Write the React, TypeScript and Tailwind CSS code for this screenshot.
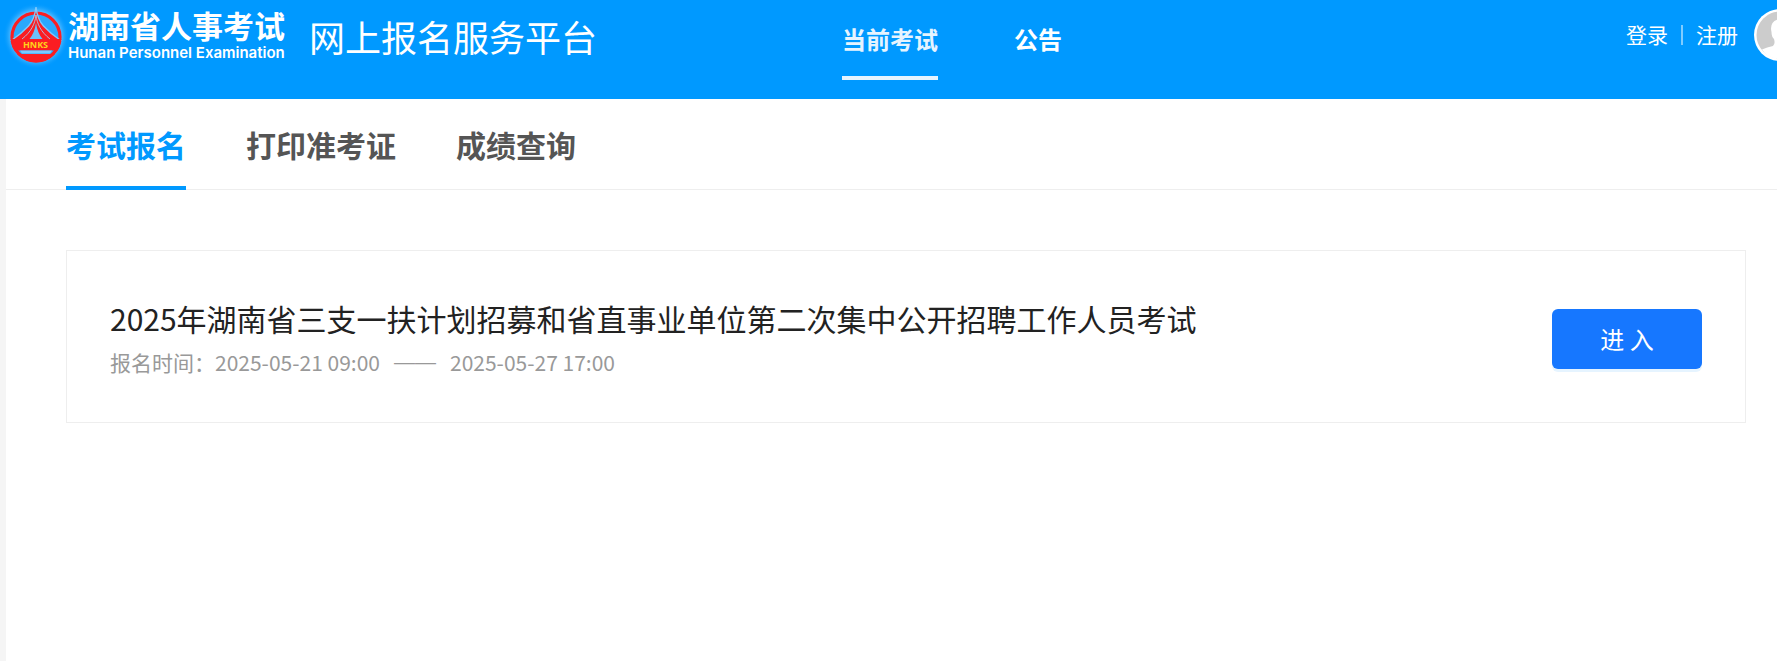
import React from 'react';

function Emblem() {
  return (
    <svg viewBox="0 0 60 60" className="size-15 shrink-0 overflow-visible" role="img" aria-label="HNKS">
      <defs>
        <radialGradient id="halo">
          <stop offset="0.72" stopColor="#6cc4ff" />
          <stop offset="1" stopColor="#0099ff" stopOpacity="0" />
        </radialGradient>
        <clipPath id="disc">
          <circle cx="30" cy="31" r="25.500" />
        </clipPath>
      </defs>
      <circle cx="30" cy="30" r="33" fill="url(#halo)" />
      <circle cx="30" cy="31" r="24" fill="#2ba8fd" stroke="#fb1d22" strokeWidth="3.200" />
      <path d="M30 1 C29 10 27 15 22.500 20 Q15 28 6 34 H54 Q45 28 37.500 20 C33 15 31 10 30 1Z" fill="#fb1d22" stroke="#7ccaff" strokeWidth="1.400" />
      <g clipPath="url(#disc)">
        <path d="M4 33 H56 V44.500 H4Z" fill="#fb1d22" />
        <path d="M6 48 H54 V58 H6Z" fill="#fb1d22" />
        <path d="M14 44.500 H46 L44 47.500 H16Z" fill="#7ccaff" />
      </g>
      <path d="M30 9 C29 18 25 26 16 33 M30 9 C31 18 35 26 44 33" fill="none" stroke="#a9d8ff" strokeWidth="0.800" />
      <path d="M30 17 Q28.500 27 23.500 33 H36.500 Q31.500 27 30 17Z" fill="#6cc0fa" />
      <text x="29.500" y="42" textAnchor="middle" fontSize="9" fontWeight="700" fill="#ffd21a" fontFamily="Open Sans, sans-serif">HNKS</text>
    </svg>
  );
}

function Avatar() {
  return (
    <svg viewBox="0 0 52 52" className="size-13 shrink-0" role="img" aria-label="用户头像">
      <circle cx="26" cy="26" r="26" fill="#fff" />
      <circle cx="26" cy="26" r="23.500" fill="#ccc" />
      <path d="M8 40.500 Q13 38 19 37 Q21.500 35 20 30 Q17.500 28 17.500 23 Q15 12 26 10 Q37 12 34.500 23 Q34.500 28 32 30 Q30.500 35 33 37 Q39 38 44 40.500 Q38 50 26 49.500 Q14 50 8 40.500Z" fill="#fff" />
    </svg>
  );
}

const tabs = ['考试报名', '打印准考证', '成绩查询'];

export default function App() {
  return (
    <div className="min-h-screen overflow-hidden bg-white font-['Noto_Sans_CJK_SC',sans-serif]">
      <header className="flex h-[99px] items-start bg-[#0099ff] text-white">
        <a href="#home" className="flex h-[72px] w-[285px] shrink-0 items-center pl-1.5">
          <Emblem />
          <span className="flex flex-col gap-1 pb-0.5 pl-0.5 whitespace-nowrap">
            <span className="text-[31px] leading-8 font-bold">湖南省人事考试</span>
            <span className="font-['Inter',sans-serif] text-[15px] leading-4 font-semibold">Hunan Personnel Examination</span>
          </span>
        </a>
        <h1 className="shrink-0 pt-2.5 pl-6 text-4xl leading-[52px]">网上报名服务平台</h1>
        <nav className="flex shrink-0 gap-[76px] pl-[245px] text-2xl font-bold">
          <a href="#exams" className="h-20 border-b-4 border-[#e6f4ff] leading-[78px] text-[#e6f4ff]">当前考试</a>
          <a href="#notices" className="h-20 leading-[78px]">公告</a>
        </nav>
        <div className="-mr-[29px] ml-auto flex h-[70px] shrink-0 items-center text-[21px]">
          <a href="#login">登录</a>
          <span className="mx-[13px] h-5 w-0.5 bg-[#80ccff]" />
          <a href="#register">注册</a>
          <span className="ml-4">
            <Avatar />
          </span>
        </div>
      </header>
      <div className="flex min-h-[calc(100vh-99px)]">
        <aside className="w-1.5 shrink-0 bg-[#f5f5f5]" />
        <main className="min-w-0 grow">
          <nav className="flex gap-[60px] border-b border-[#eee] pl-[60px] text-3xl font-bold text-[#555]">
            {tabs.map((tab, i) => (
              <a
                key={tab}
                href={'#tab-' + i}
                className={
                  i === 0
                    ? '-mb-px h-[91px] border-b-4 border-[#0099ff] leading-[90px] text-[#0099ff]'
                    : 'h-[90px] leading-[90px]'
                }
              >
                {tab}
              </a>
            ))}
          </nav>
          <section className="mt-[60px] mr-[31px] ml-[60px] flex h-[173px] items-center justify-between border border-[#eee] pr-[43px] pl-[43px]">
            <div>
              <h2 className="text-3xl leading-[50px] text-[#222]">
                2025年湖南省三支一扶计划招募和省直事业单位第二次集中公开招聘工作人员考试
              </h2>
              <p className="flex text-[21px] leading-[38px] text-[#999]">
                <span>报名时间：</span>
                <span>2025-05-21 09:00</span>
                <span className="mx-3.5 font-['Liberation_Sans',sans-serif]">——</span>
                <span>2025-05-27 17:00</span>
              </p>
            </div>
            <button
              type="button"
              className="mt-1 h-[60px] w-[150px] shrink-0 rounded-md bg-[#1677ff] text-2xl text-white shadow-[0_3px_0_#e6f4ff]"
            >
              进 入
            </button>
          </section>
        </main>
      </div>
    </div>
  );
}
